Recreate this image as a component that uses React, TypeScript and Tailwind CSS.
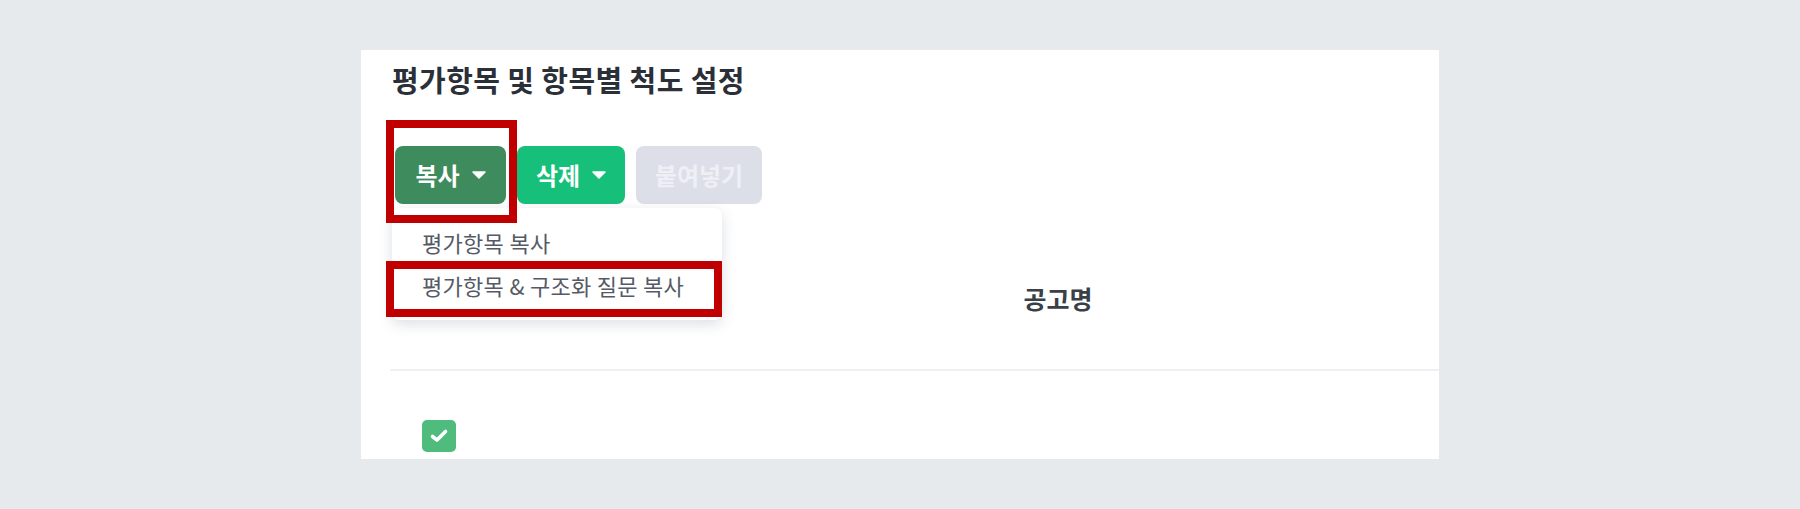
import React from "react";

const font = { fontFamily: '"Noto Sans CJK KR", "Noto Sans", sans-serif' };

function Caret() {
  return (
    <svg width="14" height="8" viewBox="0 0 14 8" className="ml-[12px]">
      <path d="M1 1 L13 1 L7 7 Z" fill="white" stroke="white" strokeWidth="1.5" strokeLinejoin="round" />
    </svg>
  );
}

export default function App() {
  return (
    <div className="w-[1800px] h-[509px] bg-[#e6eaed] pt-[50px] pl-[361px]" style={font}>
      <div className="relative w-[1078px] h-[409px] bg-white overflow-hidden">
        <div className="pl-[31px] pt-[15px]">
          <h1 className="text-[29px] leading-[29px] font-bold tracking-[0.4px] text-[#2b2f38]">평가항목 및 항목별 척도 설정</h1>
          <div className="mt-[52px] flex gap-[11px] ml-[3px]">
            <button className="h-[58px] w-[111px] rounded-[8px] bg-[#3e8b5e] text-white text-[24px] font-bold flex items-center justify-center">
              복사<Caret />
            </button>
            <button className="h-[58px] w-[108px] rounded-[8px] bg-[#17c07a] text-white text-[24px] font-bold flex items-center justify-center">
              삭제<Caret />
            </button>
            <button className="h-[58px] w-[126px] rounded-[8px] bg-[#dcdfe8] text-[#eef0f5] text-[24px] font-bold flex items-center justify-center">
              붙여넣기
            </button>
          </div>
        </div>
        <div className="mt-[25px] ml-[29px]">
          <div className="h-[142px] flex items-center border-b-2 border-[#eef1f3]">
            <div className="w-[100px]" />
            <div className="w-[187px]" />
            <div className="flex-1 text-center text-[25px] font-bold text-[#3a3f48]">공고명</div>
          </div>
          <div className="pt-[49px] pl-[32px]">
            <div className="w-[34px] h-[32px] rounded-[5px] bg-[#4fbb7d] flex items-center justify-center">
              <svg width="20" height="16" viewBox="0 0 20 16">
                <path d="M3.5 8.5 L8 12 L16.5 3.5" fill="none" stroke="white" strokeWidth="3.6" strokeLinecap="round" strokeLinejoin="round" />
              </svg>
            </div>
          </div>
        </div>

        <div className="absolute left-[31px] top-[158px] w-[330px] py-[13px] rounded-[8px] bg-white shadow-[0_4px_14px_rgba(60,70,100,0.18)]">
          <div className="h-[43px] flex items-center pl-[30px] text-[22px] tracking-[0.3px] text-[#555a66]">평가항목 복사</div>
          <div className="h-[43px] flex items-center pl-[30px] text-[22px] tracking-[0.3px] text-[#555a66]">평가항목 &amp; 구조화 질문 복사</div>
        </div>

        <div className="absolute left-[25px] top-[70px] w-[131px] h-[103px] border-[8px] border-[#c00000]" />
        <div className="absolute left-[25px] top-[211px] w-[336px] h-[56px] border-[8px] border-[#c00000]" />
      </div>
    </div>
  );
}
